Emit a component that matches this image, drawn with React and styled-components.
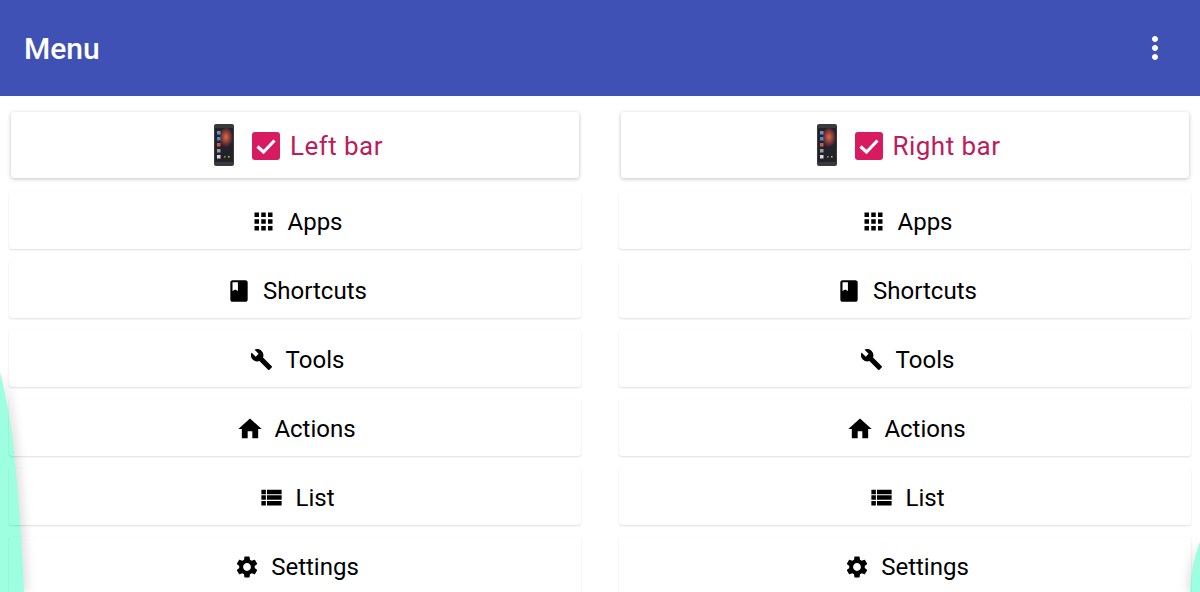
import React from 'react';
import styled, { createGlobalStyle } from 'styled-components';
import { MdApps, MdBook, MdBuild, MdHome, MdViewList, MdSettings, MdMoreVert } from 'react-icons/md';

const GlobalStyle = createGlobalStyle`
  html, body {
    margin: 0;
    height: 592px;
    overflow: hidden;
    background: #fff;
    font-family: Roboto, "Liberation Sans", sans-serif;
  }
`;

const menuItems = [
  { label: 'Apps', Icon: MdApps, size: 27 },
  { label: 'Shortcuts', Icon: MdBook, size: 26 },
  { label: 'Tools', Icon: MdBuild, size: 23 },
  { label: 'Actions', Icon: MdHome, size: 28 },
  { label: 'List', Icon: MdViewList, size: 27 },
  { label: 'Settings', Icon: MdSettings, size: 26 },
];

const PhoneIcon = ({ id }) => (
  <svg width="20" height="42" viewBox="0 0 20 42">
    <defs>
      <radialGradient id={id} cx="0.5" cy="0.45" r="0.5">
        <stop offset="0" stopColor="#d9703f" />
        <stop offset="0.55" stopColor="#8a3a3a" />
        <stop offset="1" stopColor="#2a2230" />
      </radialGradient>
    </defs>
    <rect x="0" y="0" width="20" height="42" rx="2" fill="#3a3a3c" />
    <rect x="1" y="4" width="18" height="34" fill="#23222a" />
    <ellipse cx="12" cy="14" rx="7" ry="10" fill={`url(#${id})`} />
    <rect x="3" y="7" width="3.5" height="3.5" fill="#6f93b5" />
    <rect x="3" y="13" width="3.5" height="3.5" fill="#3a8fcc" />
    <rect x="3" y="19" width="3.5" height="3.5" fill="#cf5a4c" />
    <rect x="3" y="25" width="3.5" height="3.5" fill="#8fa3a0" />
    <rect x="3" y="31" width="3.5" height="3.5" fill="#dcdcdc" />
    <rect x="10" y="32" width="1.6" height="1.6" fill="#4caf50" />
    <rect x="14" y="32" width="1.6" height="1.6" fill="#8bc34a" />
  </svg>
);

const CheckMark = () => (
  <svg width="28" height="28" viewBox="0 0 28 28">
    <path d="M5.5 14.5 L11.5 20 L22.5 8.5" fill="none" stroke="#fff" strokeWidth="3.2" />
  </svg>
);

const BarCard = ({ label }) => (
  <TopCard>
    <PhoneSlot><PhoneIcon id={`glow-${label[0]}`} /></PhoneSlot>
    <CheckBox><CheckMark /></CheckBox>
    <TopLabel>{label}</TopLabel>
  </TopCard>
);

const Column = ({ label }) => (
  <ColumnWrap>
    <BarCard label={label} />
    {menuItems.map(({ label: name, Icon, size }) => (
      <Row key={name}>
        <IconSlot><Icon size={size} color="#000" /></IconSlot>
        <RowLabel>{name}</RowLabel>
      </Row>
    ))}
  </ColumnWrap>
);

export default function App() {
  return (
    <Page>
      <GlobalStyle />
      <LeftWave viewBox="0 0 40 220" preserveAspectRatio="none">
        <path d="M0 0 C6 24 11 50 14 80 C17 110 21 150 24 220 L0 220 Z" fill="#9dffdf" />
      </LeftWave>
      <RightWave viewBox="0 0 20 50" preserveAspectRatio="none">
        <path d="M20 0 C14 14 11 30 10 50 L20 50 Z" fill="#9dffdf" />
      </RightWave>
      <Header>
        <Title>Menu</Title>
        <MdMoreVert size={36} color="#fff" />
      </Header>
      <Columns>
        <Column label="Left bar" />
        <Column label="Right bar" />
      </Columns>
    </Page>
  );
}

const Page = styled.div`
  position: relative;
  height: 592px;
  overflow: hidden;
`;

const LeftWave = styled.svg`
  position: absolute;
  left: 0;
  top: 372px;
  width: 40px;
  height: 220px;
  filter: drop-shadow(4px 0 5px rgba(0, 0, 0, 0.12));
`;

const RightWave = styled.svg`
  position: absolute;
  right: 0;
  top: 542px;
  width: 20px;
  height: 50px;
  filter: drop-shadow(-3px 0 4px rgba(0, 0, 0, 0.12));
`;

const Header = styled.header`
  position: relative;
  height: 96px;
  background: #3f51b5;
  display: flex;
  align-items: center;
  justify-content: space-between;
  padding: 0 27px 0 24px;
`;

const Title = styled.h1`
  margin: 0;
  font-size: 30px;
  font-weight: 500;
  color: #fff;
`;

const Columns = styled.main`
  position: relative;
  display: grid;
  grid-template-columns: 572px 572px;
  column-gap: 38px;
  padding: 16px 9px 0;
`;

const ColumnWrap = styled.section`
  display: flex;
  flex-direction: column;
  gap: 12px;
`;

const TopCard = styled.div`
  height: 66px;
  margin: 0 2px 2px;
  padding-top: 2px;
  box-sizing: border-box;
  display: flex;
  align-items: center;
  justify-content: center;
  border-radius: 3px;
  box-shadow: 0 1px 4px rgba(0, 0, 0, 0.24);
`;

const PhoneSlot = styled.span`
  display: flex;
  margin: -2px 18px 0 7px;
`;

const CheckBox = styled.span`
  width: 28px;
  height: 28px;
  border-radius: 3px;
  background: #d81b60;
  display: flex;
  margin-right: 10px;
`;

const TopLabel = styled.span`
  font-size: 26px;
  letter-spacing: 0.45px;
  color: #bd1c5c;
`;

const Row = styled.div`
  height: 57px;
  flex: none;
  box-sizing: border-box;
  padding-top: 2px;
  display: flex;
  align-items: center;
  justify-content: center;
  border-radius: 3px;
  box-shadow: 0 1px 2px rgba(0, 0, 0, 0.12), 0 0 1px rgba(0, 0, 0, 0.07);
`;

const IconSlot = styled.span`
  width: 31px;
  margin-right: 9px;
  display: flex;
  align-items: center;
  justify-content: center;
`;

const RowLabel = styled.span`
  font-size: 24px;
  color: #000;
`;
